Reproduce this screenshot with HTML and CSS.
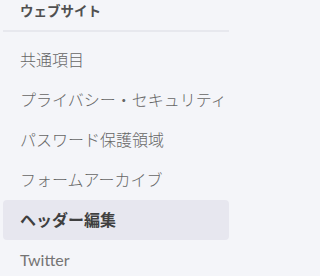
FILE: index.html
```html
<!DOCTYPE html>
<html lang="ja">
<head>
<meta charset="utf-8">
<link rel="stylesheet" href="styles.css">
</head>
<body>
<nav class="side">
  <div class="head">ウェブサイト</div>
  <div class="divider"></div>
  <ul class="menu">
    <li class="item">共通項目</li>
    <li class="item">プライバシー・セキュリティ</li>
    <li class="item">パスワード保護領域</li>
    <li class="item">フォームアーカイブ</li>
    <li class="item active">ヘッダー編集</li>
    <li class="item latin">Twitter</li>
  </ul>
</nav>
</body>
</html>
```
FILE: styles.css
```css
html, body {
  margin: 0;
  padding: 0;
  background: #f4f5f9;
}
body {
  font-family: Lato, "Noto Sans CJK JP", sans-serif;
  width: 232px;
  height: 276px;
  overflow: hidden;
}
.side {
  padding: 0 3px;
}
.head {
  height: 30px;
  line-height: 23px;
  padding-left: 17px;
  font-size: 13.5px;
  font-weight: 700;
  color: #505050;
}
.divider {
  height: 2px;
  background: #e7e8ee;
}
.menu {
  list-style: none;
  margin: 8px 0 0;
  padding: 0;
}
.item {
  height: 40px;
  line-height: 39px;
  padding-left: 17px;
  font-size: 16px;
  font-weight: 300;
  color: #666;
  white-space: nowrap;
  border-radius: 4px;
}
.item.latin {
  font-weight: 400;
  color: #747474;
}
.item.active {
  background: #e7e7ef;
  color: #3f3f3f;
  font-weight: 700;
}
```
